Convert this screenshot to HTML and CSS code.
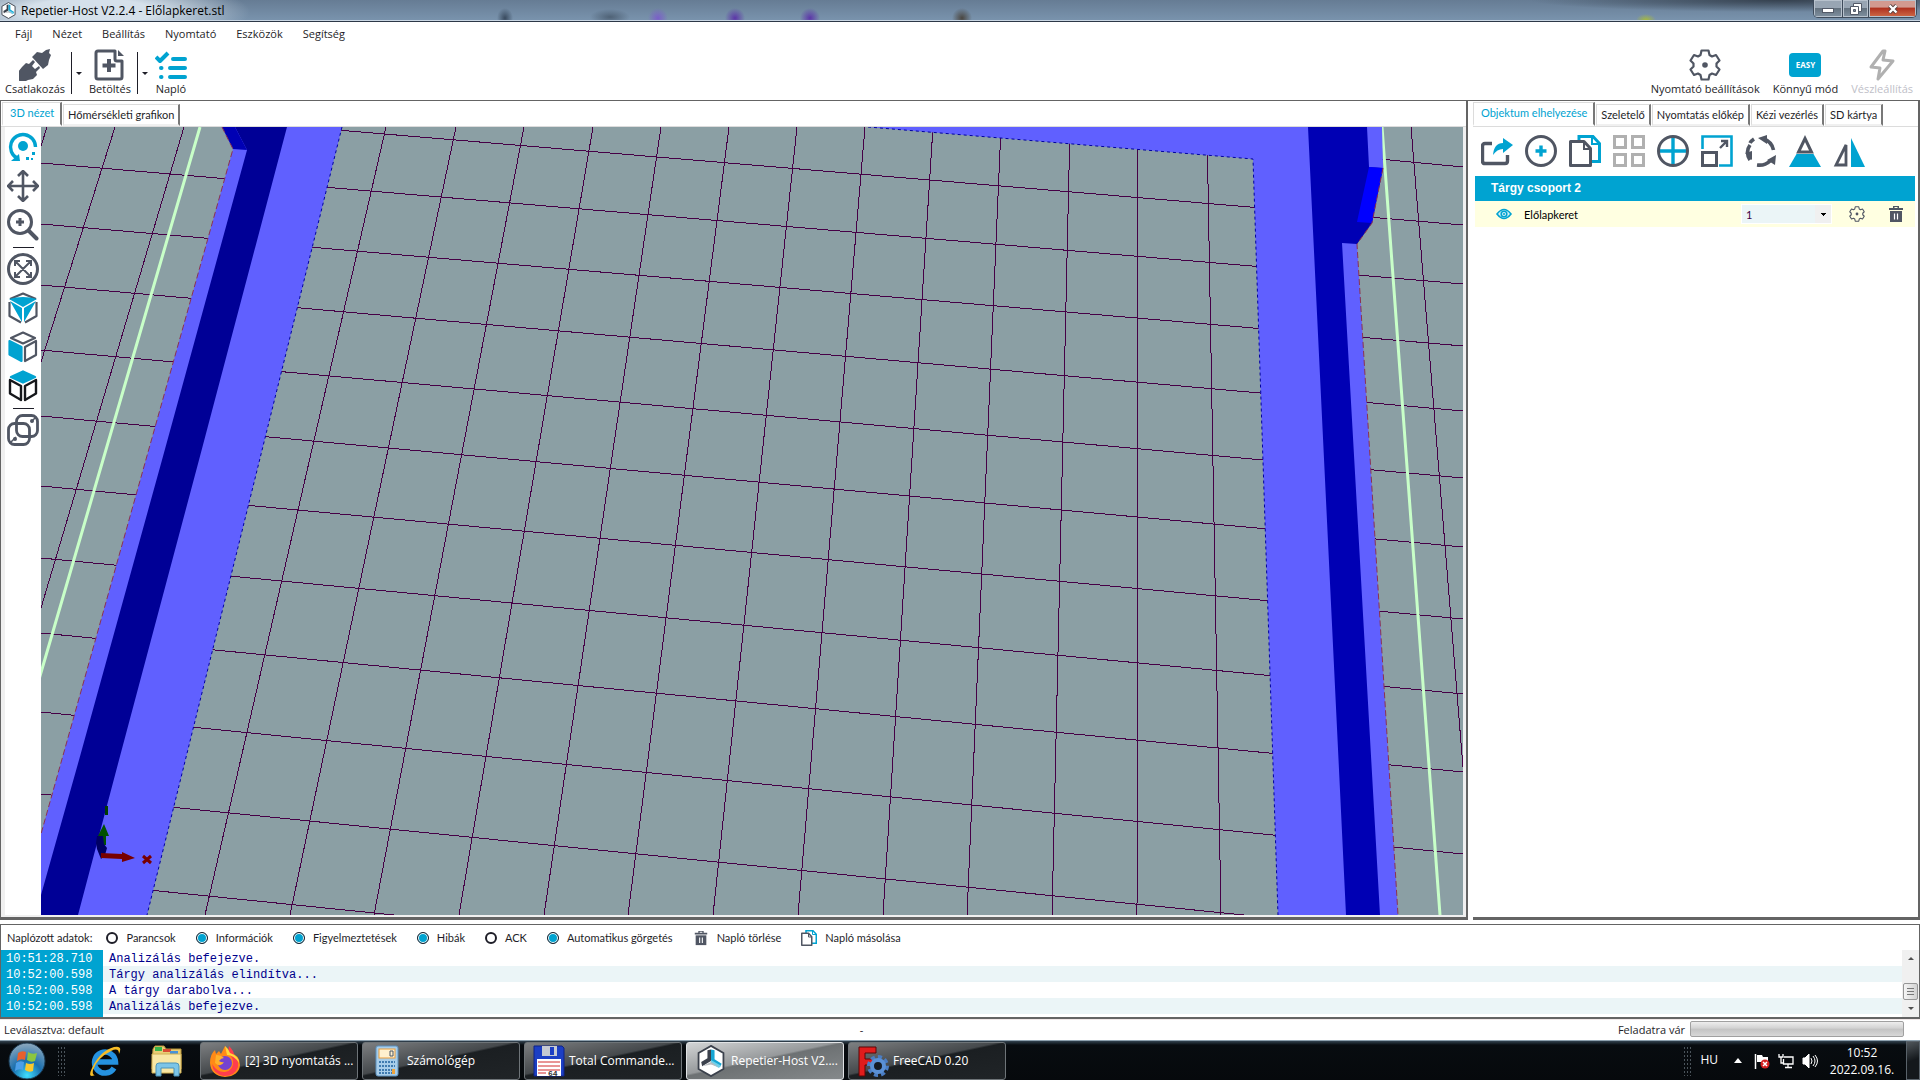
FILE: index.html
```html
<!DOCTYPE html>
<html lang="hu">
<head>
  <meta charset="UTF-8" />
  <meta name="viewport" content="width=device-width, initial-scale=1.0"/>
  <title>Repetier-Host V2.2.4 - Előlapkeret.stl</title>
  <link rel="stylesheet" href="styles.css">
</head>
<body>
  <!-- shared icons -->
  <svg class="defs" width="0" height="0" aria-hidden="true">
    <symbol id="i-logo" viewBox="0 0 32 36">
      <path d="M16 1 30 9v18l-14 8L2 27V9z" fill="#fff" stroke="#3b414c" stroke-width="2"/>
      <path d="M12 6l4-1v13L6 24l-1-5 7-4z" fill="#3b414c"/>
      <path d="M16 5l4 1v10l8 5-2 4-10-7z" fill="#16a5d3"/>
      <path d="M16 17l11 6-2 3-9-5z" fill="#6fd0ea"/>
      <path d="M6 24l10-5 9 6-9-3z" fill="#b8bcc0"/>
    </symbol>
    <symbol id="i-gear" viewBox="0 0 32 32">
      <path d="M12.500 1.500h7l1 4.500 2.500 1.500 4-1.500 3.500 5.500-3 3v3l3 3-3.500 5.500-4-1.500-2.500 1.500-1 4.500h-7l-1-4.500-2.500-1.500-4 1.500-3.500-5.500 3-3v-3l-3-3 3.500-5.500 4 1.500 2.500-1.500z" fill="none" stroke="#505663" stroke-width="2.200" stroke-linejoin="round"/>
      <circle cx="16" cy="16" r="2.800" fill="#505663"/>
    </symbol>
    <symbol id="i-trash" viewBox="0 0 16 18">
      <path d="M1 3h14v2H1zM5 1h6v2H9.500V2h-3v1H5z" fill="#505663"/>
      <path d="M2 6h12v11H2z" fill="#505663"/>
      <path d="M6.500 8.500v6M9.500 8.500v6" stroke="#fff" stroke-width="1.200"/>
    </symbol>
    <symbol id="i-copy" viewBox="0 0 32 32">
      <path d="M10 9V1.500h14l6.500 7v18H22" fill="none" stroke="#00a3d1" stroke-width="3"/>
      <path d="M23 1v8h8" fill="none" stroke="#00a3d1" stroke-width="2"/>
      <path d="M1.500 6.500H15l6.500 7v17h-20z" fill="#fff" stroke="#505663" stroke-width="3" stroke-linejoin="round"/>
      <path d="M15 6v8h7" fill="none" stroke="#505663" stroke-width="2"/>
    </symbol>
  </svg>

  <header class="titlebar">
    <svg class="title-logo"><use href="#i-logo"/></svg>
    <h1>Repetier-Host V2.2.4 - Előlapkeret.stl</h1>
    <div class="window-buttons">
      <button class="win-min" aria-label="Kis méret">
        <svg width="14" height="8" viewBox="0 0 14 8"><rect x="1.500" y="3.500" width="11" height="4" fill="#fff" stroke="#535a68"/></svg>
      </button>
      <button class="win-max" aria-label="Előző méret">
        <svg width="12" height="12" viewBox="0 0 12 12"><path d="M3.500.500h8v8h-8z" fill="#fff" stroke="#535a68"/><path d="M.500 3.500h8v8h-8z" fill="#fff" stroke="#535a68"/><path d="M3.500 6.500h2v2h-2z" fill="#7d8a9c" stroke="#535a68"/></svg>
      </button>
      <button class="win-close" aria-label="Bezárás">
        <svg width="12" height="10" viewBox="0 0 12 10"><path d="M2.500 1.500l7 7M9.500 1.500l-7 7" stroke="#53413f" stroke-width="4"/><path d="M2.500 1.500l7 7M9.500 1.500l-7 7" stroke="#fff" stroke-width="2.400"/></svg>
      </button>
    </div>
  </header>

  <nav class="menu">
    <a href="#">Fájl</a>
    <a href="#">Nézet</a>
    <a href="#">Beállítás</a>
    <a href="#">Nyomtató</a>
    <a href="#">Eszközök</a>
    <a href="#">Segítség</a>
  </nav>

  <div class="toolbar">
    <button class="tool">
      <svg width="32" height="32" viewBox="0 0 32 32" fill="#505663">
        <path d="M13 8l5-5 5 1 4-3 4-1-1 4 2 2-2 5-1 5-5 4z"/>
        <path d="M3 18l4-4 3 1 4-4 2 2-3 4 3 3 4-3 1 2-4 4 1 3-4 4-5 1-2 1-4 1-5-2 2-4-1-4z"/>
      </svg>
      <span>Csatlakozás</span>
    </button>
    <button class="drop" aria-label="Csatlakozás lehetőségek"></button>
    <button class="tool">
      <svg width="32" height="32" viewBox="0 0 32 32" fill="none" stroke="#505663" stroke-width="3">
        <path d="M21 2H4q-2 0-2 2v24q0 2 2 2h22q2 0 2-2V12h-5q-2 0-2-2z" stroke-linejoin="round"/>
        <path d="M24 1l6 6h-6z" fill="#505663" stroke="none"/>
        <path d="M15 10v13M8.500 16.500h13" stroke-width="4"/>
      </svg>
      <span>Betöltés</span>
    </button>
    <button class="drop" aria-label="Betöltés lehetőségek"></button>
    <button class="tool">
      <svg width="32" height="32" viewBox="0 0 32 32" fill="none" stroke="#00a3d1" stroke-width="4" stroke-linecap="round">
        <path d="M1 8l4 4 8-8" stroke-linejoin="round" stroke-linecap="butt"/>
        <path d="M18 10h12M15 19h15M15 28h15"/><path d="M6 19h.500M6 28h.500"/>
      </svg>
      <span>Napló</span>
    </button>
    <div class="toolbar-right">
      <button class="tool">
        <svg width="32" height="32"><use href="#i-gear"/></svg>
        <span>Nyomtató beállítások</span>
      </button>
      <button class="tool">
        <b class="easy">EASY</b>
        <span>Könnyű mód</span>
      </button>
      <button class="tool" disabled>
        <svg width="32" height="32" viewBox="0 0 32 32" fill="none" stroke="#b0b0b0" stroke-width="3" stroke-linejoin="round"><path d="M17 2L5 18l9 1-2 11 15-18-10-1 2-9z"/></svg>
        <span>Vészleállítás</span>
      </button>
    </div>
  </div>

  <main class="work">
    <section class="pane view-pane">
      <div class="tabs" role="tablist">
        <button class="tab active" role="tab" aria-selected="true">3D nézet</button>
        <button class="tab" role="tab">Hőmérsékleti grafikon</button>
      </div>
      <div class="pane-body">
        <div class="side-tools">
          <button aria-label="Forgatás">
            <svg width="32" height="32" viewBox="0 0 32 32"><circle cx="16" cy="15" r="5" fill="#00a3d1"/><path d="M10 27A12.500 12.500 0 1 1 28.500 16" fill="none" stroke="#00a3d1" stroke-width="3.400"/><path d="M4 30l8-7 1 7z" fill="#00a3d1"/><path d="M25 21h3v3h-3zM19 26h3v3h-3zM24 27h2v2h-2z" fill="#00a3d1"/></svg>
          </button>
          <button aria-label="Mozgatás">
            <svg width="32" height="32" viewBox="0 0 32 32" fill="none" stroke="#505663" stroke-width="2.600"><path d="M16 2v28M2 16h28M11 6l5-5 5 5M11 26l5 5 5-5M6 11l-5 5 5 5M26 11l5 5-5 5"/></svg>
          </button>
          <button aria-label="Nagyítás">
            <svg width="32" height="32" viewBox="0 0 32 32" fill="none" stroke="#505663" stroke-width="3"><circle cx="13" cy="13" r="11.500"/><path d="M13 9v8M9 13h8"/><path d="M22 22l7.500 7.500" stroke-width="4" stroke-linecap="round"/></svg>
          </button>
          <hr>
          <button aria-label="Illesztés">
            <svg width="32" height="32" viewBox="0 0 32 32" fill="none" stroke="#505663" stroke-width="2"><circle cx="16" cy="16" r="14.500" stroke-width="3"/><path d="M9 9l14 14M23 9L9 23M8 13V8h5M19 8h5v5M24 19v5h-5M13 24H8v-5"/></svg>
          </button>
          <button aria-label="Izometrikus nézet">
            <svg width="32" height="32" viewBox="0 0 32 32" fill="none" stroke="#505663" stroke-width="2.200" stroke-linejoin="round"><path d="M3 7l13-5.500L29 7M2.500 10v14L14 30.500M29.500 10v14L18 30.500"/><path d="M2 7q14-4 28 0L16 15z" fill="#00a3d1" stroke="none"/><path d="M3 9l12 7v14zM29 9l-12 7v14z" fill="#00a3d1" stroke="none"/></svg>
          </button>
          <button aria-label="Elölnézet">
            <svg width="32" height="32" viewBox="0 0 32 32" fill="none" stroke="#505663" stroke-width="2.200" stroke-linejoin="round"><path d="M4 7l12-5.500L28 7l-12 5.500zM18 16l11-6v14l-11 6z"/><path d="M2.500 10l12 6v14l-12-6.500z" fill="#00a3d1" stroke="#00a3d1"/></svg>
          </button>
          <button aria-label="Felülnézet">
            <svg width="32" height="32" viewBox="0 0 32 32" fill="none" stroke="#15171b" stroke-width="2.400" stroke-linejoin="round"><path d="M3 10l11 6v14L3 23.500zM29 10l-11 6v14l11-6.500z"/><path d="M4 7l12-5.500L28 7l-12 5.500z" fill="#00a3d1" stroke="#00a3d1"/></svg>
          </button>
          <hr>
          <button aria-label="Párhuzamos vetítés">
            <svg width="32" height="32" viewBox="0 0 32 32" fill="none" stroke="#505663" stroke-width="2.800"><rect x="9.500" y="1.500" width="21" height="21" rx="6"/><rect x="1.500" y="9.500" width="21" height="21" rx="6"/><path d="M24 8l5-5M3 29l6-6" stroke-width="1.500"/><circle cx="25" cy="7" r="2" fill="#505663" stroke="none"/><circle cx="8" cy="25" r="2" fill="#505663" stroke="none"/></svg>
          </button>
        </div>
        <svg class="scene" viewBox="0 0 1422 788" preserveAspectRatio="xMidYMid slice" role="img" aria-label="3D nézet">
          <rect width="1422" height="788" fill="#8b9fa4"/>
          <!-- bed grid -->
          <g class="grid-lines">
            <path d="M0-22L1422 98M0 36L1422 157M0 97L1422 219M0 158L1422 284M0 223L1422 351M0 289L1422 420M0 359L1422 492M0 431L1422 567M0 506L1422 645M0 585L1422 727M0 667L1422 810M0 752L1422 897M1213 20L1422 40"/>
            <path d="M6 0L0 19M74 0L0 235M143 0L0 481M345 0L164 788M415 0L249 788M483 0L333 788M552 0L418 788M620 0L503 788M688 0L587 788M756 0L672 788M824 0L757 788M892 0L842 788M960 0L926 788M1029 0L1011 788M1097 0L1096 788M1166 0L1180 788M1370 0L1434 788"/>
          </g>
          <!-- printable area border -->
          <path class="bed-edge" d="M159 0L-3 556M1341 0L1399 788"/>
          <!-- left rail -->
          <path d="M181 0H301L106 788H0V707L192 22z" fill="#6060ff"/>
          <path d="M194 0H246L158 333 78 633 37 788H0V768L38 633 121 333 206 23z" fill="#000096"/>
          <path d="M181 0h13l12 23-14-1z" fill="#0000b4"/>
          <path class="cut" d="M181 0l11 22L0 707"/>
          <path class="seam" d="M301 0L106 788"/>
          <!-- top and right rail -->
          <path d="M827 0H1341L1342 41 1316 117 1357 788H1237L1212 32z" fill="#6060ff"/>
          <path d="M1267 0H1326L1328 40 1342 41 1331 96 1316 117 1301 116 1339 788H1305z" fill="#0000b4"/>
          <path d="M1328 40l14 1-11 55-15-1z" fill="#0000ff"/>
          <path class="cut" d="M1342 41l-11 55-15 21 41 671"/>
          <path class="seam" d="M827 0l385 32 25 756"/>
          <!-- axes -->
          <path d="M64 679h3v9h-3z" fill="#003c00"/>
          <path d="M63 697l5 12h-3v9h-4v-9h-4z" fill="#005000"/>
          <path d="M56 709h6l1 8 3 4-2 7-4 4-4-10-1-6z" fill="#000064"/>
          <path d="M60 726l21 1v-2l13 6-13 4v-3l-21-1z" fill="#780000"/>
          <path d="M102 729l8 7M110 729l-8 7" stroke="#780000" stroke-width="3"/>
        </svg>
      </div>
    </section>

    <section class="pane object-pane">
      <div class="tabs" role="tablist">
        <button class="tab active" role="tab" aria-selected="true">Objektum elhelyezése</button>
        <button class="tab" role="tab">Szeletelő</button>
        <button class="tab" role="tab">Nyomtatás előkép</button>
        <button class="tab" role="tab">Kézi vezérlés</button>
        <button class="tab" role="tab">SD kártya</button>
      </div>
      <div class="object-body">
        <div class="object-tools">
          <button aria-label="Exportálás">
            <svg width="32" height="32" viewBox="0 0 32 32"><path d="M11 8.500H4q-2.500 0-2.500 2.500v15q0 2.500 2.500 2.500h20q2.500 0 2.500-2.500v-6" fill="none" stroke="#505663" stroke-width="3.400"/><path d="M12 20q1-12 10-12V3l10 7-10 8v-4q-6 0-10 6z" fill="#00a3d1"/></svg>
          </button>
          <button aria-label="Hozzáadás">
            <svg width="32" height="32" viewBox="0 0 32 32" fill="none"><circle cx="16" cy="16" r="14.500" stroke="#505663" stroke-width="3"/><path d="M16 10.500v11M10.500 16h11" stroke="#00a3d1" stroke-width="3.400"/></svg>
          </button>
          <button aria-label="Másolás"><svg width="32" height="32"><use href="#i-copy"/></svg></button>
          <button aria-label="Elrendezés">
            <svg width="32" height="32" viewBox="0 0 32 32" fill="none" stroke="#b0b0b0" stroke-width="3"><path d="M1.500 1.500h11v11h-11zM19.500 1.500h11v11h-11zM1.500 19.500h11v11h-11zM19.500 19.500h11v11h-11z"/></svg>
          </button>
          <button aria-label="Középre">
            <svg width="32" height="32" viewBox="0 0 32 32" fill="none"><path d="M16 2v28M2 16h28" stroke="#00a3d1" stroke-width="3.400"/><circle cx="16" cy="16" r="14.500" stroke="#505663" stroke-width="3"/></svg>
          </button>
          <button aria-label="Méretezés">
            <svg width="32" height="32" viewBox="0 0 32 32" fill="none" stroke-width="3"><path d="M1.500 14V1.500h29v29H18" stroke="#00a3d1" stroke-width="2.600"/><path d="M1.500 17.500h14v13h-14z" stroke="#505663"/><path d="M19 13l7-7M20 6h6v6" stroke="#505663" stroke-width="2.400"/></svg>
          </button>
          <button aria-label="Elforgatás">
            <svg width="32" height="32" viewBox="0 0 32 32" fill="none" stroke="#505663" stroke-width="3.600"><path d="M19 4q8 3 9.500 11M25 26q-5 5-13 4M5 25q-5-8 0-15M9 4q-3 2-4 4"/><path d="M13 3l9-3v9zM31 20l-1 10-8-5zM0 18l7-2v9z" fill="#505663" stroke="none"/></svg>
          </button>
          <button aria-label="Vágás">
            <svg width="32" height="32" viewBox="0 0 32 32"><path d="M16 3.500L22.500 17h-13z" fill="none" stroke="#505663" stroke-width="3"/><path d="M7.500 19h17L32 32H0z" fill="#00a3d1"/></svg>
          </button>
          <button aria-label="Tükrözés">
            <svg width="32" height="32" viewBox="0 0 32 32"><path d="M13 10v20H3z" fill="none" stroke="#505663" stroke-width="2.800"/><path d="M18 3v29h14z" fill="#00a3d1"/></svg>
          </button>
        </div>
        <h2 class="group-title">Tárgy csoport 2</h2>
        <div class="object-row">
          <button class="eye" aria-label="Láthatóság">
            <svg width="16" height="12" viewBox="0 0 16 12"><path d="M1 6q7-9 14 0-7 9-14 0z" fill="#d8f1f7" stroke="#00a3d1" stroke-width="1.600"/><circle cx="8" cy="6" r="2.800" fill="none" stroke="#00a3d1" stroke-width="1.600"/><circle cx="8" cy="6" r="1" fill="#00a3d1"/></svg>
          </button>
          <label for="copies">Előlapkeret</label>
          <select id="copies"><option>1</option><option>2</option></select>
          <button aria-label="Beállítások"><svg width="16" height="16"><use href="#i-gear"/></svg></button>
          <button aria-label="Törlés"><svg width="16" height="18"><use href="#i-trash"/></svg></button>
        </div>
      </div>
    </section>
  </main>

  <section class="log">
    <div class="log-tools">
      <span class="log-caption">Naplózott adatok:</span>
      <label><input type="checkbox">Parancsok</label>
      <label><input type="checkbox" checked>Információk</label>
      <label><input type="checkbox" checked>Figyelmeztetések</label>
      <label><input type="checkbox" checked>Hibák</label>
      <label><input type="checkbox">ACK</label>
      <label><input type="checkbox" checked>Automatikus görgetés</label>
      <button><svg width="16" height="16"><use href="#i-trash"/></svg>Napló törlése</button>
      <button><svg width="16" height="16"><use href="#i-copy"/></svg>Napló másolása</button>
    </div>
    <div class="log-body">
      <table class="log-table">
        <tbody>
          <tr><th scope="row">10:51:28.710</th><td>Analizálás befejezve.</td></tr>
          <tr><th scope="row">10:52:00.598</th><td>Tárgy analizálás elindítva...</td></tr>
          <tr><th scope="row">10:52:00.598</th><td>A tárgy darabolva...</td></tr>
          <tr><th scope="row">10:52:00.598</th><td>Analizálás befejezve.</td></tr>
          <tr class="log-rest"><th></th><td></td></tr>
        </tbody>
      </table>
      <div class="scrollbar">
        <button class="scroll-up" aria-label="Fel"></button>
        <div class="thumb"></div>
        <button class="scroll-down" aria-label="Le"></button>
      </div>
    </div>
  </section>

  <div class="status">
    <span>Leválasztva: default</span>
    <span class="status-mid">-</span>
    <span class="status-job">Feladatra vár</span>
    <div class="progress" role="progressbar" aria-label="Feladatra vár"></div>
  </div>

  <footer class="taskbar">
    <button class="start" aria-label="Start">
      <svg width="38" height="38" viewBox="0 0 38 38">
        <defs><radialGradient id="orb" cx=".5" cy=".9" r=".9"><stop offset="0" stop-color="#3fe0ff"/><stop offset=".45" stop-color="#1a6fae"/><stop offset="1" stop-color="#8fa9bd"/></radialGradient></defs>
        <circle cx="19" cy="19" r="18" fill="url(#orb)" stroke="#1b3950"/>
        <path d="M10 11q4-3 8-1l-1 8q-4-2-8 1z" fill="#e8602c"/>
        <path d="M20 10q4 3 9 1l-2 8q-4 2-8-1z" fill="#8cc63e"/>
        <path d="M8 21q4-3 8-1l-1 8q-4-2-8 1z" fill="#4d9fe8"/>
        <path d="M18 21q4 2 8 0l-1 8q-4 2-8-1z" fill="#fbc92c"/>
      </svg>
    </button>
    <span class="grip"></span>
    <button class="pin" aria-label="Internet Explorer">
      <svg width="34" height="34" viewBox="0 0 34 34" fill="none">
        <path d="M26 24A10.500 10.500 0 1 1 27.500 18H9" stroke="#2592e0" stroke-width="5.500"/>
        <path d="M7 31Q-1 35 4 24 12 7 26 3q9-2 5 7 0-7-8-3Q9 14 5 26q-1 5 2 5z" fill="#f6bd27"/>
      </svg>
    </button>
    <button class="pin" aria-label="Windows Intéző">
      <svg width="32" height="32" viewBox="0 0 32 32">
        <path d="M2 4l2-3h9l2 3h15v20H1z" fill="#e9cd75" stroke="#b89439"/>
        <path d="M4 2h7v4H4z" fill="#39b54a"/><path d="M12 4h8v3h-8z" fill="#d94d33"/><path d="M19 6h8v3h-8z" fill="#4792d8"/>
        <path d="M1 9h29v19H1z" fill="#f8e7a5" stroke="#d0b055"/>
        <path d="M5 31V21q0-3 3-3h17q3 0 3 3v10h-5v-8H10v8z" fill="#7cc5e8" stroke="#4d93b8"/>
      </svg>
    </button>
    <div class="tasks">
      <button class="task">
        <svg width="32" height="32" viewBox="0 0 32 32">
          <path d="M16 1q3 3 4 6 11 3 11 13-1 11-15 12Q2 31 1 18 1 9 6 5l1 4 3-3 2 3z" fill="#ff8a16"/>
          <path d="M20 1q5 5 5 9 5 4 4 12-3 9-14 9Q4 29 3 19q6 9 13 8 9-2 8-11-1-5-5-8z" fill="#ff3d4d"/>
          <path d="M16 1q4 3 5 7 9 3 9 10-5-8-12-8z" fill="#ffd93b"/>
          <circle cx="16" cy="18" r="7" fill="#7542cf"/>
          <path d="M7 10q5 0 8 3-3 0-5 3 3 2 5 1-3 6-9 1z" fill="#ffb12b"/>
        </svg>
        <span>[2] 3D nyomtatás ...</span>
      </button>
      <button class="task">
        <svg width="32" height="32" viewBox="0 0 32 32">
          <rect x="5" y="1" width="22" height="30" rx="2" fill="#a7cdea" stroke="#5d91bd"/>
          <rect x="8" y="4" width="16" height="9" fill="#fff0cf" stroke="#e89d3c"/>
          <path d="M19 6h3v5h-3z" fill="none" stroke="#4a5665"/>
          <path d="M8 17h16M8 21h16M8 25h16M8 28h16" stroke="#3f7bb0" stroke-width="2" stroke-dasharray="2 1"/>
          <path d="M21 24h3v5h-3z" fill="#f0a43b"/>
        </svg>
        <span>Számológép</span>
      </button>
      <button class="task">
        <svg width="32" height="32" viewBox="0 0 32 32">
          <path d="M1 1h28l2 2v28H1z" fill="#1c3fc4" stroke="#0e2384"/>
          <path d="M9 1h15v10H9z" fill="#c5cad2"/><path d="M17 2h4v8h-4z" fill="#1c3fc4"/>
          <path d="M4 14h24v17H4z" fill="#fff"/><path d="M5 17h22M5 21h22M5 25h22M5 28h8" stroke="#d12d2d"/>
          <text x="15" y="31" class="disk-label">64</text>
        </svg>
        <span>Total Commande...</span>
      </button>
      <button class="task current">
        <svg width="32" height="32"><use href="#i-logo"/></svg>
        <span>Repetier-Host V2....</span>
      </button>
      <button class="task">
        <svg width="32" height="32" viewBox="0 0 32 32">
          <path d="M2 2h17v6H8v6h8v6H8v11H2z" fill="#e01c1c" stroke="#5a0707"/>
          <circle cx="21" cy="21" r="9" fill="none" stroke="#4a7dc4" stroke-width="4" stroke-dasharray="4 3"/>
          <circle cx="21" cy="21" r="6" fill="#151b24" stroke="#5a90d6" stroke-width="4"/>
        </svg>
        <span>FreeCAD 0.20</span>
      </button>
    </div>
    <div class="tray">
      <span class="grip"></span>
      <button class="lang">HU</button>
      <button aria-label="Rejtett ikonok"><svg width="8" height="5" viewBox="0 0 8 5"><path d="M0 5l4-5 4 5z" fill="#fff"/></svg></button>
      <button aria-label="Műveletközpont">
        <svg width="16" height="16" viewBox="0 0 16 16"><path d="M1.500 1v15" stroke="#fff" stroke-width="1.500"/><path d="M3 2h5l1 2h5v6H8L7 9H3z" fill="#fff"/><circle cx="11" cy="11" r="4.500" fill="#d32020"/><path d="M9 9l4 4M13 9l-4 4" stroke="#fff" stroke-width="1.500"/></svg>
      </button>
      <button aria-label="Hálózat">
        <svg width="16" height="16" viewBox="0 0 16 16" fill="none" stroke="#fff" stroke-width="1.300"><path d="M6 4h9v7H5.500V6M10 11v3M7 14.500h7M1 1v3h4V1M3 4v6h2"/></svg>
      </button>
      <button aria-label="Hangerő">
        <svg width="16" height="16" viewBox="0 0 16 16" fill="none" stroke="#fff"><path d="M1 5h2l4-4v14l-4-4H1z" fill="#fff"/><path d="M9 5q2 3 0 6M11 3q4 5 0 10M13 2q5 6 0 12"/></svg>
      </button>
      <div class="clock"><time>10:52</time><span>2022.09.16.</span></div>
      <button class="show-desktop" aria-label="Asztal megjelenítése"></button>
    </div>
  </footer>
</body>
</html>
```
FILE: styles.css
```css
* {
  margin: 0;
  padding: 0;
  box-sizing: border-box;
}

body {
  height: 100vh;
  display: flex;
  flex-direction: column;
  overflow: hidden;
  background: #fff;
  color: #1e1e28;
  font-family: 'Open Sans', 'Noto Sans', sans-serif;
  font-size: 11px;
}

button {
  background: none;
  border: none;
  font: inherit;
  color: inherit;
  white-space: nowrap;
}

svg {
  display: block;
  flex-shrink: 0;
}

.defs {
  position: absolute;
}

/* title bar */
.titlebar {
  height: 22px;
  flex-shrink: 0;
  display: flex;
  align-items: flex-start;
  padding: 0 3px 0 1px;
  border-bottom: 1px solid #2d3848;
  box-shadow: inset 0 -1px #c9d6e3;
  background:
    radial-gradient(ellipse 160px 34px at 90px 12px, #d5e0ea 40%, transparent),
    radial-gradient(ellipse 9px 8px at 125px 20px, #c46a78, transparent),
    radial-gradient(ellipse 8px 10px at 505px 18px, #394a5e, transparent),
    radial-gradient(ellipse 20px 8px at 610px 17px, #4f6276, transparent),
    radial-gradient(ellipse 10px 10px at 658px 18px, #7a5fc8, transparent),
    radial-gradient(ellipse 10px 10px at 735px 18px, #5c36a8, transparent),
    radial-gradient(ellipse 10px 10px at 810px 18px, #5c36a8, transparent),
    radial-gradient(ellipse 10px 10px at 962px 18px, #4a4640, transparent),
    radial-gradient(ellipse 10px 6px at 1646px 20px, #a6b93c, transparent),
    radial-gradient(ellipse 250px 12px at 1780px 0, #35414f, transparent),
    linear-gradient(#667c94, #7a94ae);
}

.title-logo {
  width: 15px;
  height: 17px;
  margin-top: 2px;
}

h1 {
  font-size: 12px;
  font-weight: normal;
  line-height: 22px;
  margin-left: 5px;
  color: #000;
}

.window-buttons {
  margin-left: auto;
  display: flex;
  height: 18px;
  border: 1px solid #3e4b5b;
  border-top: none;
  border-radius: 0 0 5px 5px;
  overflow: hidden;
}

.window-buttons button {
  display: flex;
  justify-content: center;
  align-items: center;
  border-right: 1px solid #3e4b5b;
  box-shadow: inset 0 0 0 1px #b7c1cc;
  background: linear-gradient(#98a5b3 45%, #64727f 50%, #8090a0);
}

.win-min {
  width: 29px;
}

.win-max {
  width: 26px;
}

.window-buttons .win-close {
  width: 47px;
  border-right: none;
  background: linear-gradient(#d29a90 40%, #b03421 50%, #cf6a48);
}

/* menu */
.menu {
  height: 24px;
  flex-shrink: 0;
  display: flex;
  gap: 20px;
  padding-left: 15px;
  line-height: 24px;
}

.menu a {
  color: #1e1e28;
  text-decoration: none;
}

/* main toolbar */
.toolbar {
  height: 55px;
  flex-shrink: 0;
  display: flex;
  align-items: flex-start;
  padding: 3px 7px 0 5px;
  border-bottom: 1px solid #646464;
}

.tool {
  display: flex;
  flex-direction: column;
  align-items: center;
  line-height: 16px;
}

.tool:disabled {
  color: #c0c0c8;
}

.drop {
  width: 12px;
  height: 42px;
  margin: 3px 6px 0;
  border-left: 1px solid #1e1e28;
  display: flex;
  align-items: center;
}

.drop::after {
  content: '';
  margin-left: 4px;
  border: 3px solid transparent;
  border-top-color: #1e1e28;
  border-bottom: none;
}

.toolbar-right {
  margin-left: auto;
  display: flex;
  gap: 13px;
}

.easy {
  width: 32px;
  height: 24px;
  margin: 4px 0;
  border-radius: 4px;
  background: #00a3d1;
  color: #fff;
  font-size: 8px;
  line-height: 24px;
}

/* work area */
.work {
  flex: 1;
  min-height: 0;
  display: grid;
  grid-template-columns: 1fr 447px;
  gap: 5px;
  margin-bottom: 4px;
  border-left: 1px solid #646464;
}

.pane {
  min-width: 0;
  display: flex;
  flex-direction: column;
  border-right: 2px solid #646464;
  border-bottom: 3px solid #646464;
}

.tabs {
  height: 26px;
  flex-shrink: 0;
  display: flex;
  align-items: flex-end;
  padding: 1px 0 0 1px;
  font-family: Lato, 'Liberation Sans', sans-serif;
  border-bottom: 1px solid #dcdcdc;
}

.object-pane .tabs {
  padding-left: 0;
}

.tab {
  height: 22px;
  padding: 0 4px;
  margin-right: 1px;
  border: 1px solid #dcdcdc;
  border-right: 2px solid #787878;
  border-bottom: 2px solid #f0f0f0;
}

.tab.active {
  height: 24px;
  padding: 0 6px 3px 7px;
  border-bottom-color: #fff;
  color: #00a3d1;
}

.pane-body {
  flex: 1;
  min-height: 0;
  display: flex;
  padding: 0 3px 2px 4px;
  background: #f0f0f0;
}

.side-tools {
  width: 36px;
  flex-shrink: 0;
  background: #fff;
  display: flex;
  flex-direction: column;
  align-items: center;
}

.side-tools button {
  height: 39px;
  display: flex;
  align-items: center;
}

.side-tools hr {
  width: 21px;
  margin: 3px 0 1px;
  border: none;
  border-top: 1px solid #1e1e28;
}

.scene {
  flex: 1;
  min-width: 0;
  height: 100%;
}

.grid-lines {
  stroke: #460046;
  stroke-width: 1;
  shape-rendering: crispEdges;
}

.bed-edge {
  stroke: #c8ffc8;
  stroke-width: 3;
}

.cut {
  fill: none;
  stroke: #8c3250;
  stroke-dasharray: 6 3;
}

.seam {
  fill: none;
  stroke: #0000a0;
  stroke-dasharray: 3 3;
}

/* object list */
.object-body {
  flex: 1;
  margin: 0 3px 1px 2px;
}

.object-tools {
  height: 49px;
  display: flex;
  align-items: center;
  gap: 12px;
  padding: 0 0 2px 6px;
}

.group-title {
  height: 25px;
  padding-left: 16px;
  background: #00a3d1;
  color: #fff;
  font: bold 12px/24px 'Liberation Sans', Arial, sans-serif;
}

.object-row {
  height: 26px;
  display: flex;
  align-items: center;
  padding: 0 11px 0 21px;
  background: #ffffe1;
  font-family: Lato, 'Liberation Sans', sans-serif;
  color: #000;
}

.object-row label {
  margin: 0 auto 0 12px;
}

.object-row button {
  margin-left: 17px;
}

.object-row button + button {
  margin-left: 23px;
}

.object-row .eye {
  margin-left: 0;
}

/* the arrow is stacked from three bars */
.object-row select {
  width: 91px;
  height: 20px;
  padding-left: 4px;
  appearance: none;
  border: 1px solid #fff;
  border-radius: 0;
  font: inherit;
  color: #3c0046;
  background:
    linear-gradient(#000, #000) right 5px top 8px / 5px 1px no-repeat,
    linear-gradient(#000, #000) right 6px top 9px / 3px 1px no-repeat,
    linear-gradient(#000, #000) right 7px top 10px / 1px 1px no-repeat,
    linear-gradient(90deg, #ebf5f7 73px, #f0f0f0 73px);
}

/* log */
.log {
  flex-shrink: 0;
  border: 1px solid #646464;
  border-bottom-width: 2px;
}

.log-tools {
  height: 25px;
  display: flex;
  align-items: center;
  gap: 20px;
  padding-left: 6px;
  font-family: Lato, 'Liberation Sans', sans-serif;
}

.log-caption {
  margin-right: -6px;
}

.log-tools label,
.log-tools button {
  display: flex;
  align-items: center;
  gap: 8px;
}

.log-tools input {
  appearance: none;
  width: 12px;
  height: 12px;
  border: 2px solid #1e1e28;
  border-radius: 50%;
}

.log-tools input:checked {
  border-width: 1px;
  background: #00a3d1;
  box-shadow: inset 0 0 0 1px #fff;
}

.log-body {
  height: 67px;
  display: flex;
}

.log-table {
  flex: 1;
  border-collapse: collapse;
  font-family: 'Liberation Mono', 'Courier New', monospace;
  font-size: 12px;
  line-height: 14px;
  color: #00008c;
}

.log-table tr:nth-child(even) {
  background: #ebf5f7;
}

.log-table th {
  width: 102px;
  background: #00a3d1;
  color: #fff;
  font-weight: normal;
  text-align: left;
  padding: 2px 0 0 5px;
}

.log-table td {
  padding: 2px 0 0 6px;
}

.log-rest {
  height: 3px;
}

.scrollbar {
  width: 17px;
  display: flex;
  flex-direction: column;
  align-items: center;
  background: #f0f0f0;
}

.scrollbar button {
  width: 17px;
  height: 17px;
  display: flex;
  align-items: center;
  justify-content: center;
}

.scroll-up::after {
  content: '';
  border: 3px solid transparent;
  border-bottom-color: #505050;
  border-top: none;
}

.scroll-down::after {
  content: '';
  border: 3px solid transparent;
  border-top-color: #505050;
  border-bottom: none;
}

.thumb {
  width: 15px;
  height: 17px;
  margin-top: auto;
  border: 1px solid #969696;
  border-radius: 2px;
  background:
    repeating-linear-gradient(#787878 0 1px, transparent 1px 3px) center / 7px 7px no-repeat,
    linear-gradient(90deg, #f5f5f5, #d2d2d2);
}

/* status bar */
.status {
  height: 21px;
  flex-shrink: 0;
  display: grid;
  grid-template-columns: 1fr auto 1fr auto;
  align-items: center;
  padding: 0 16px 2px 4px;
  border-top: 1px solid #f0e8e8;
}

.status-mid {
  margin-left: 34px;
}

.status-job {
  text-align: right;
}

.progress {
  width: 214px;
  height: 16px;
  margin-left: 5px;
  border: 1px solid #a0a0a0;
  border-radius: 2px;
  background: linear-gradient(#eee, #d2d2d2 45%, #c3c3c3 50%, #d8d8d8);
}

/* taskbar */
.taskbar {
  height: 40px;
  flex-shrink: 0;
  display: flex;
  align-items: center;
  background: linear-gradient(#334350, #080c10 4px, #06090c);
  border-top: 1px solid #8da0ae;
  color: #fff;
  font-size: 12px;
}

.start {
  margin-left: 8px;
}

.grip {
  width: 8px;
  height: 30px;
  margin-left: 11px;
  background: radial-gradient(circle, #4b545b 1px, transparent 1px) 0 0 / 3px 4px;
}

.pin {
  margin-left: 23px;
}

.pin + .pin {
  margin-left: 29px;
}

.tasks {
  display: flex;
  gap: 4px;
  margin-left: 17px;
}

.task {
  width: 158px;
  height: 38px;
  display: flex;
  align-items: center;
  gap: 4px;
  padding-left: 8px;
  border: 1px solid #6e7478;
  border-radius: 3px;
  background: linear-gradient(168deg, #7d7f81, #45494c 45%, #1b1f22 48%, #202427);
}

.task.current {
  border-color: #e1e3e5;
  background: linear-gradient(168deg, #d2d4d5, #96999b 45%, #6d7173 48%, #85898b);
}

.disk-label {
  font: bold 8px 'Liberation Mono', monospace;
  fill: #333;
}

.tray {
  margin-left: auto;
  height: 100%;
  display: flex;
  align-items: center;
}

.tray button {
  margin-left: 8px;
}

.tray .lang {
  margin: 0 8px 3px 9px;
}

.tray .lang + button {
  margin-right: 4px;
}

.clock {
  width: 88px;
  display: flex;
  flex-direction: column;
  align-items: center;
  line-height: 17px;
}

.tray .show-desktop {
  width: 14px;
  height: 100%;
  margin: 0;
  border: 1px solid #59626a;
  background: linear-gradient(160deg, #50565b, #14181c 50%);
}
```
